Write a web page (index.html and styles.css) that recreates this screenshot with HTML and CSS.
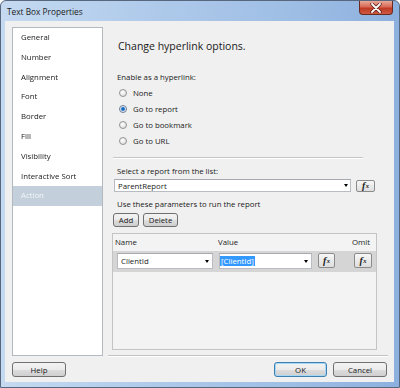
FILE: index.html
```html
<!DOCTYPE html>
<html lang="en">
<head>
    <meta charset="UTF-8">
    <title>Text Box Properties</title>
    <link rel="stylesheet" href="styles.css">
</head>
<body>
    <div class="window">
        <div class="titlebar">
            <span class="title">Text Box Properties</span>
            <span class="close-btn">
                <svg width="12" height="10" viewBox="0 0 12 10">
                    <path d="M2 1 L10 9 M10 1 L2 9" stroke="#5a1f16" stroke-width="3.4" stroke-linecap="round"/>
                    <path d="M2 1 L10 9 M10 1 L2 9" stroke="#fff" stroke-width="1.8" stroke-linecap="round"/>
                </svg>
            </span>
        </div>
        <div class="client">
            <div class="main">
                <ul class="nav">
                    <li>General</li>
                    <li>Number</li>
                    <li>Alignment</li>
                    <li>Font</li>
                    <li>Border</li>
                    <li>Fill</li>
                    <li>Visibility</li>
                    <li>Interactive Sort</li>
                    <li class="selected">Action</li>
                </ul>
                <div class="panel">
                    <h1>Change hyperlink options.</h1>
                    <div class="label label-first">Enable as a hyperlink:</div>
                    <div class="radios">
                        <div class="radio"><span class="dot"></span>None</div>
                        <div class="radio"><span class="dot checked"></span>Go to report</div>
                        <div class="radio"><span class="dot"></span>Go to bookmark</div>
                        <div class="radio"><span class="dot"></span>Go to URL</div>
                    </div>
                    <div class="sep"></div>
                    <div class="label label-select">Select a report from the list:</div>
                    <div class="combo-row">
                        <div class="combo combo-report">ParentReport<span class="arrow"></span></div>
                        <span class="fx fx-report"><i>f</i><sub>x</sub></span>
                    </div>
                    <div class="label label-params">Use these parameters to run the report</div>
                    <div class="btn-row">
                        <button class="btn btn-add">Add</button>
                        <button class="btn btn-delete">Delete</button>
                    </div>
                    <div class="grid">
                        <div class="grid-head">
                            <span class="col-name">Name</span>
                            <span class="col-value">Value</span>
                            <span class="col-omit">Omit</span>
                        </div>
                        <div class="grid-row">
                            <div class="cell">
                                <div class="combo combo-name">ClientId<span class="arrow"></span></div>
                            </div>
                            <div class="cell">
                                <div class="combo combo-value"><span class="selection">[ClientId]</span><span class="arrow"></span></div>
                                <span class="fx fx-value"><i>f</i><sub>x</sub></span>
                            </div>
                            <div class="cell">
                                <span class="fx fx-omit"><i>f</i><sub>x</sub></span>
                            </div>
                        </div>
                    </div>
                </div>
            </div>
            <div class="footer">
                <button class="btn btn-help">Help</button>
                <span class="spacer"></span>
                <button class="btn btn-ok">OK</button>
                <button class="btn btn-cancel">Cancel</button>
            </div>
        </div>
    </div>
</body>
</html>
```

FILE: styles.css
```css
:root {
    --client-bg: #f0f0f0; --text-color: #1a1a1a; --border-light: #b4b8bf;
    --select-bg: #c3cfdb; --highlight: #3399ff;
}
body {
    margin: 0; width: 400px; height: 388px; overflow: hidden;
    font-family: 'Open Sans', sans-serif; font-size: 7.8px; color: var(--text-color);
    font-variant-ligatures: none; -webkit-font-smoothing: antialiased;
}
.window {
    width: 400px; height: 388px; box-sizing: border-box; display: flex; flex-direction: column;
    border: 1px solid #56677e; border-radius: 6px 6px 0 0;
    background: linear-gradient(90deg, #c5daf1 0, #b0cbeb 35%, #a0bfe5 70%, #8cb0de 100%);
}
.titlebar { height: 20px; display: flex; justify-content: space-between; align-items: flex-start; padding: 0 6px; }
.title { line-height: 20px; padding-top: 1px; font-size: 8.3px; color: #1b1b1b; }
.close-btn {
    width: 34px; height: 14px; box-sizing: border-box; display: flex; justify-content: center; align-items: center;
    border: 1px solid #6b2a20; border-top: none; border-radius: 0 0 4px 4px;
    background: linear-gradient(#e9a898 0, #d86a55 45%, #bf3a24 55%, #cf5a42 100%);
}

.client { flex: 1; margin: 0 5px 5px 4px; background: var(--client-bg); display: flex; flex-direction: column; }
.main { display: flex; padding: 6px 0 0 7px; }
.nav { width: 91px; height: 329px; box-sizing: border-box; margin: 0; padding: 0; list-style: none; border: 1px solid var(--border-light); background: #fff; will-change: transform; }
.nav li { height: 19.8px; line-height: 19.8px; padding-left: 8px; color: var(--text-color); }
.nav li.selected { background: var(--select-bg); color: #f3f6f9; }

.panel {
    margin-left: 5px; width: 280px; height: 329px; box-sizing: border-box; padding: 12px 0 0 9px;
    display: flex; flex-direction: column; align-items: flex-start;
    border-bottom: 1px solid #c2c2c2; box-shadow: 0 1px 0 #fff;
}
h1 { margin: 0 0 0 1px; font-size: 10.5px; font-weight: normal; line-height: 14px; }
.label { line-height: 12px; }
.label-first { margin-top: 18px; }
.radios { margin: 2px 0 0 2px; display: flex; flex-direction: column; }
.radio { height: 16px; display: flex; align-items: center; }
.dot {
    width: 8px; height: 8px; box-sizing: border-box; margin-right: 6px; border-radius: 50%;
    border: 1px solid #939393; background: radial-gradient(circle at 40% 35%, #fff, #d6d6d6);
}
.dot.checked { background: radial-gradient(circle, #0c4e9c 0, #3b87d6 1.6px, #dce8f5 2.4px, #f2f2f2 100%); border-color: #6c7f95; }
.sep { margin: 8px 0 0 -4px; width: 250px; border-top: 1px solid #c6c6c6; border-bottom: 1px solid #fff; }
.label-select { margin-top: 6px; }

.combo {
    height: 13px; box-sizing: border-box; display: flex; align-items: center; padding-left: 3px;
    background: #fff; border: 1px solid #b9bcc2; border-top-color: #a6a9ae;
}
.arrow { margin-left: auto; margin-right: 2px; border-left: 2.5px solid transparent; border-right: 2.5px solid transparent; border-top: 3px solid #000; }
.combo-row { margin: 2px 0 0 -3px; display: flex; align-items: center; }
.combo-report { width: 237px; }
.fx {
    box-sizing: border-box; display: flex; justify-content: center; align-items: center;
    border: 1px solid #8b8b8b; border-radius: 2px; background: linear-gradient(#f7f7f7, #dedede);
    font-family: 'Liberation Serif', serif; font-weight: bold; color: #222;
}
.fx i { font-size: 10px; line-height: 10px; margin-right: 0.5px; }
.fx sub { font-size: 6.5px; font-style: italic; vertical-align: -1px; line-height: 6px; }
.fx-report { width: 19px; height: 12px; margin-left: 5px; }
.label-params { margin-top: 6px; }

.btn {
    box-sizing: border-box; height: 14px; padding: 0; font: inherit; color: var(--text-color);
    border: 1px solid #707070; border-radius: 3px;
    background: linear-gradient(#f3f3f3 0, #ebebeb 50%, #dddddd 51%, #cfcfcf 100%);
}
.btn-row { margin: 3px 0 0 -4px; display: flex; gap: 4px; }
.btn-add { width: 26px; }
.btn-delete { width: 35px; }

.grid { margin: 6px 0 0 -5px; width: 265px; height: 117px; box-sizing: border-box; border: 1px solid #c4c4c4; background: #f3f3f3; }
.grid-head, .grid-row { display: grid; grid-template-columns: 102px 130px 1fr; }
.grid-head { height: 17px; line-height: 17px; }
.col-name { padding-left: 2px; }
.col-value { padding-left: 3px; }
.col-omit { padding-left: 7px; }
.grid-row { height: 21px; box-sizing: border-box; padding-top: 2px; background: #d5d5d5; }
.cell { display: flex; align-items: flex-start; }
.combo-name, .combo-value { height: 16px; margin-left: 4px; }
.combo-name { width: 96px; }
.combo-name .arrow, .combo-value .arrow { margin-right: 3px; }
.combo-value { width: 93px; padding-left: 0; }
.selection { background: var(--highlight); color: #fff; line-height: 10px; padding: 0 1px; }
.fx-value { width: 17px; height: 15px; margin-left: 6px; }
.fx-omit { width: 18px; height: 15px; margin-left: 9px; }

.footer { display: flex; gap: 6px; padding: 6px 7px 0 7px; }
.footer .btn { height: 15px; }
.spacer { flex: 1; }
.btn-help { width: 54px; }
.btn-ok { width: 53px; border-color: #3c7fb1; box-shadow: inset 0 0 0 1px #a6d8f6; }
.btn-cancel { width: 54px; }
```
